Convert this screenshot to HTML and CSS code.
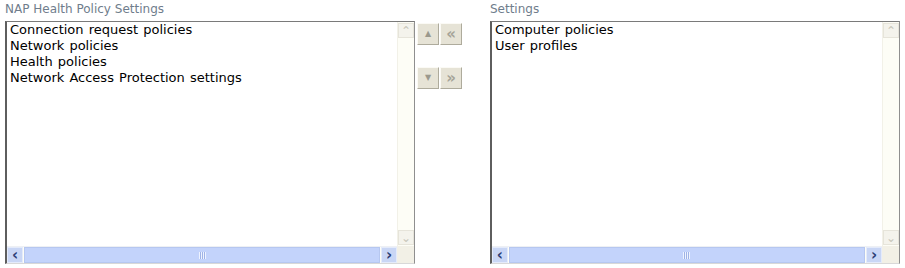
FILE: index.html
```html
<!DOCTYPE html>
<html lang="en">
<head>
  <meta charset="UTF-8">
  <title>NAP Health Policy Settings</title>
  <link rel="stylesheet" href="styles.css">
</head>
<body>
  <div class="picker">
    <div class="panel">
      <div class="panel-label">NAP Health Policy Settings</div>
      <div class="listbox">
        <ul class="items">
          <li>Connection request policies</li>
          <li>Network policies</li>
          <li>Health policies</li>
          <li>Network Access Protection settings</li>
        </ul>
        <div class="vscroll">
          <span class="sb-btn sb-off">&#8963;</span>
          <span class="sb-track"></span>
          <span class="sb-btn sb-off">&#8964;</span>
        </div>
        <div class="hscroll">
          <span class="sb-btn sb-on">&lsaquo;</span>
          <span class="sb-thumb"><span class="grip"></span></span>
          <span class="sb-btn sb-on">&rsaquo;</span>
        </div>
        <div class="corner"></div>
      </div>
    </div>

    <div class="movers">
      <div class="mover-row">
        <button class="mover" type="button">&#9650;</button>
        <button class="mover" type="button">&laquo;</button>
      </div>
      <div class="mover-row">
        <button class="mover" type="button">&#9660;</button>
        <button class="mover" type="button">&raquo;</button>
      </div>
    </div>

    <div class="panel">
      <div class="panel-label">Settings</div>
      <div class="listbox">
        <ul class="items">
          <li>Computer policies</li>
          <li>User profiles</li>
        </ul>
        <div class="vscroll">
          <span class="sb-btn sb-off">&#8963;</span>
          <span class="sb-track"></span>
          <span class="sb-btn sb-off">&#8964;</span>
        </div>
        <div class="hscroll">
          <span class="sb-btn sb-on">&lsaquo;</span>
          <span class="sb-thumb"><span class="grip"></span></span>
          <span class="sb-btn sb-on">&rsaquo;</span>
        </div>
        <div class="corner"></div>
      </div>
    </div>
  </div>
</body>
</html>
```

FILE: styles.css
```css
/* General */
body {
  margin: 0;
  background: #fff;
  font-family: "DejaVu Sans", Verdana, sans-serif;
  color: #000;
}

.picker {
  display: flex;
  align-items: flex-start;
  padding: 2px 5px 0 5px;
}

/* Panels */
.panel {
  width: 411px;
}

.panel-label {
  font-size: 12px;
  line-height: 15px;
  color: #6f7d8c;
  margin-bottom: 4px;
}

.listbox {
  display: grid;
  grid-template-columns: 1fr 17px;
  grid-template-rows: 1fr 17px;
  height: 243px;
  box-sizing: border-box;
  border-style: solid;
  border-width: 1px 1px 1px 2px;
  border-color: #7a7a7a #8f8f8f #d8d8d8 #5e5e5e;
  background: #fff;
}

.items {
  list-style: none;
  margin: 0;
  padding: 0 3px;
  font-size: 13px;
  line-height: 16px;
  word-spacing: 1px;
}

/* Fake scrollbars */
.vscroll {
  display: flex;
  flex-direction: column;
  background: #fdfdf6;
  border-left: 1px solid #f2f1e8;
}

.vscroll .sb-track {
  flex: 1;
}

.hscroll {
  display: flex;
  background: #fdfdf6;
  border-top: 1px solid #eef0f4;
}

.sb-btn {
  width: 16px;
  height: 15px;
  box-sizing: border-box;
  display: flex;
  align-items: center;
  justify-content: center;
  font-size: 12px;
  line-height: 1;
}

.sb-off {
  color: #c9c7ba;
  background: #f4f3ec;
  border: 1px solid #e6e4da;
  margin: 1px 0;
}

.sb-on {
  color: #2d3e75;
  font-weight: bold;
  font-size: 15px;
  background: #c9d6f5;
  border: 1px solid #e4ebfb;
  height: 16px;
}

.sb-thumb {
  flex: 1;
  display: flex;
  align-items: center;
  justify-content: center;
  margin: 0 1px;
  background: #c3d3fb;
  border: 1px solid #b6c7f0;
  height: 16px;
  box-sizing: border-box;
}

.grip {
  width: 7px;
  height: 7px;
  background: repeating-linear-gradient(90deg, #eef3ff 0 1px, #9fb3e6 1px 2px);
}

.corner {
  background: #f2f0e6;
}

/* Move buttons */
.movers {
  display: flex;
  flex-direction: column;
  gap: 22px;
  padding: 21px 0 0 2px;
  width: 73px;
}

.mover-row {
  display: flex;
  gap: 1px;
}

.mover {
  display: flex;
  align-items: center;
  justify-content: center;
  width: 22px;
  height: 22px;
  padding: 0;
  border: 1px solid #fbfaf5;
  border-right-color: #aeab9c;
  border-bottom-color: #aeab9c;
  background: #e6e3d6;
  color: #9b998d;
  font-family: "DejaVu Sans", sans-serif;
  font-size: 8px;
  line-height: 1;
}

.mover-row .mover:nth-child(2) {
  font-size: 15px;
  font-weight: bold;
  color: #a5a398;
}
```
